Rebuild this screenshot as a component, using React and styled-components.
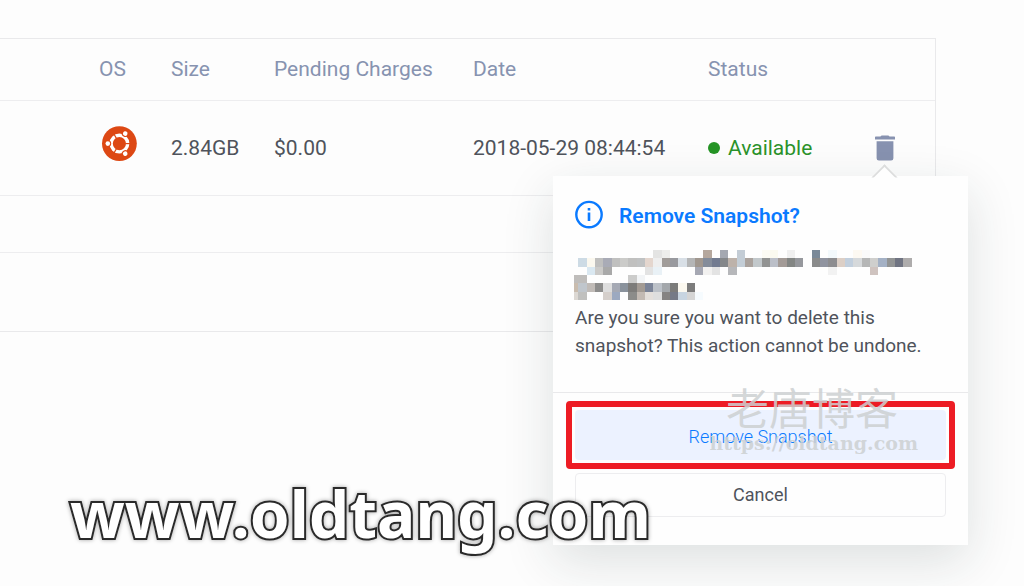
import React from "react";
import styled, { createGlobalStyle } from "styled-components";

const GlobalStyle = createGlobalStyle`
  * {
    box-sizing: border-box;
  }

  body {
    margin: 0;
    background: #fdfdfd;
    color: #4f535b;
    font-family: Roboto, "Liberation Sans", sans-serif;
    font-size: 21px;
    line-height: 28px;
    overflow-x: hidden;
  }
`;

const Page = styled.main`
  position: relative;
  min-height: 100vh;
  padding: 38px 88px 0 0;
`;

const Panel = styled.section`
  border: 1px solid #e9e9eb;
  border-left: none;
`;

const SnapshotTable = styled.table`
  width: 100%;
  table-layout: fixed;
  border-collapse: collapse;
  text-align: left;
`;

const HeadCell = styled.th`
  width: ${(props) => props.$width || "auto"};
  height: 61px;
  padding: 0 0 1px ${(props) => props.$indent || "0"};
  border-bottom: 1px solid #ededef;
  color: #8793b0;
  font-weight: 400;
`;

const Cell = styled.td`
  height: 95px;
  padding: 0 0 0 ${(props) => props.$indent || "0"};
  border-bottom: 1px solid #ededef;
`;

const Status = styled.span`
  display: flex;
  align-items: center;
  gap: 8px;
  color: #2b932b;

  &::before {
    content: "";
    width: 12px;
    height: 12px;
    border-radius: 50%;
    background: #259425;
  }
`;

const UbuntuLogo = styled.svg`
  display: block;
  width: 36px;
  height: 36px;
  margin-bottom: 8px;
`;

const Actions = styled.div`
  position: relative;
  width: 20px;
`;

const IconButton = styled.button`
  display: block;
  padding: 0;
  border: none;
  background: none;
  cursor: pointer;

  svg {
    display: block;
  }
`;

const Strip = styled.div`
  height: ${(props) => props.$height};

  & + & {
    border-top: 1px solid #ededef;
  }
`;

const Popover = styled.div`
  position: absolute;
  z-index: 1;
  top: 41px;
  right: -73px;
  width: 415px;
  background: #fefefe;
  box-shadow: 0 16px 48px rgba(30, 50, 50, 0.14);
  font-size: 19px;

  &::before {
    content: "";
    position: absolute;
    top: -8px;
    right: 74px;
    width: 17px;
    height: 17px;
    border: 2px solid #dcdddd;
    border-right: none;
    border-bottom: none;
    background: #fefefe;
    transform: rotate(45deg);
    clip-path: polygon(0 0, 100% 0, 0 100%);
  }
`;

const PopoverBody = styled.div`
  padding: 26px 22px 32px;
`;

const PopoverTitle = styled.h2`
  display: flex;
  align-items: center;
  gap: 16px;
  margin: 0 0 20px;
  color: #0a7aff;
  font-size: 21px;
  font-weight: 600;

  svg {
    overflow: visible;
  }
`;

const Redacted = styled.svg`
  display: block;
  width: 346px;
  height: 50px;
  margin: 0 0 4px -1px;
`;

const Message = styled.p`
  margin: 0;
`;

const PopoverFooter = styled.div`
  position: relative;
  display: flex;
  flex-direction: column;
  gap: 4px;
  padding: 8px 22px 28px;
  border-top: 1px solid #e9e9eb;
`;

const Highlight = styled.div`
  display: flex;
  margin: 0 -9px;
  padding: 3px;
  border: 6px solid #ed1c24;
  border-radius: 4px;
`;

const Button = styled.button`
  flex: ${(props) => (props.$primary ? "1" : "none")};
  height: ${(props) => (props.$primary ? "50px" : "44px")};
  padding: ${(props) => (props.$primary ? "3px 0 0" : "0")};
  border: ${(props) => (props.$primary ? "none" : "1px solid #ededef")};
  border-radius: 4px;
  background: ${(props) => (props.$primary ? "#ecf2ff" : "#fefefe")};
  color: ${(props) => (props.$primary ? "#0a7aff" : "#4f535b")};
  font-family: inherit;
  font-size: 18px;
  font-weight: ${(props) => (props.$primary ? "300" : "400")};
  cursor: pointer;
`;

const BlogMark = styled.div`
  position: absolute;
  top: -10px;
  right: 50px;
  color: rgba(205, 208, 209, 0.85);
  text-align: right;
  pointer-events: none;
`;

const BlogName = styled.div`
  padding-right: 20px;
  font-family: "Noto Sans CJK SC", sans-serif;
  font-size: 43px;
  line-height: 46px;
`;

const BlogUrl = styled.div`
  font-family: "DejaVu Serif", serif;
  font-size: 19px;
  font-weight: 700;
  line-height: 28px;
`;

const SiteMark = styled.div`
  position: absolute;
  z-index: 2;
  left: 70px;
  top: 469px;
  color: #ffffff;
  font-family: "Noto Sans", sans-serif;
  font-size: 64px;
  font-weight: 700;
  line-height: 90px;
  -webkit-text-stroke: 4px #2a2a2a;
  paint-order: stroke fill;
  stroke-linejoin: round;
  filter: drop-shadow(0 0 2px rgba(0, 0, 0, 0.35));
  pointer-events: none;
`;

// colours of the hidden name, row by row: [column, colour]
const mosaic = [
  [
    [9, "#e4e4e3"], [10, "#eeeeec"], [15, "#b5a79d"], [17, "#a4a8b1"],
    [19, "#c3ccd5"], [22, "#fcfbf4"], [23, "#fbfaf0"], [25, "#f0f0f0"],
    [28, "#7a8998"], [30, "#f3f9fc"], [33, "#fdf9f2"], [34, "#fafafa"],
  ],
  [
    [0, "#cddbe5"], [1, "#fbf8ef"], [2, "#bfbfbe"], [3, "#a9abb6"],
    [4, "#c0c0bf"], [5, "#cbcbc9"], [6, "#c0c0bf"], [7, "#c0c2c3"],
    [8, "#e4d6ce"], [9, "#eeeeee"], [10, "#a19c99"], [11, "#98999e"],
    [12, "#d8dfe6"], [13, "#b4b5b6"], [14, "#a0978f"], [15, "#848c9a"],
    [16, "#727b90"], [17, "#84878a"], [18, "#bdb2aa"], [19, "#c3cdd6"],
    [20, "#aaa29d"], [21, "#c2c8cb"], [22, "#929392"], [23, "#bbbfc8"],
    [24, "#a39b97"], [25, "#838684"], [26, "#96989d"], [28, "#8a8b8b"],
    [29, "#9094a0"], [30, "#8d8d90"], [31, "#dccfc6"], [32, "#c2cfdd"],
    [33, "#d6d9db"], [34, "#b5b6b6"], [35, "#cfcfcd"], [36, "#a4b1c5"],
    [37, "#929494"], [38, "#707482"], [39, "#aeacac"],
  ],
  [
    [1, "#dae8f1"], [2, "#cbcac8"], [3, "#a9a9a9"], [8, "#e3e3e3"],
    [9, "#e9f1f6"], [14, "#a6a8b3"], [15, "#f2f1f0"], [16, "#e3e3e3"],
    [18, "#b6b7ba"], [30, "#f2f2f2"], [35, "#cfc3bf"],
  ],
  [[-1, "#bfbdbb"], [0, "#bfbdbb"], [6, "#cccccb"], [7, "#f2f4f6"]],
  [
    [-1, "#c9bcae"], [0, "#c0c6cc"], [1, "#c0bbb7"], [2, "#8d8d8c"],
    [3, "#dedede"], [4, "#a5a9b4"], [5, "#8a929c"], [6, "#7d7c7a"],
    [7, "#a39b94"], [8, "#7b8498"], [9, "#bcc1c8"], [10, "#a3a7ab"],
    [11, "#7b7b7a"], [12, "#fbf8ef"], [13, "#7c7c7c"],
  ],
  [
    [-1, "#dcd8d3"], [0, "#c0c0be"], [3, "#d5cfcb"], [4, "#9ca9c0"],
    [6, "#8c8c8a"], [7, "#c3bab3"], [8, "#e4dfdb"], [9, "#dedede"],
    [10, "#858382"], [11, "#757a87"], [12, "#c8d5e1"], [13, "#d5d5d5"],
    [14, "#f6fbfe"],
  ],
];

const Ubuntu = () => (
  <UbuntuLogo viewBox="0 0 36 36" role="img" aria-label="Ubuntu">
    <circle cx="18.4" cy="17.6" r="17.4" fill="#dd4814" />
    <circle cx="18.4" cy="17.6" r="8.3" fill="none" stroke="#fff" strokeWidth="3.4" />
    {[0, 120, 240].map((angle) => (
      <g key={angle} transform={`rotate(${angle} 18.4 17.6)`}>
        <path d="M24.4 17.6h5" stroke="#dd4814" strokeWidth="1.2" />
        <circle cx="6.8" cy="17.6" r="3.4" fill="#dd4814" />
        <circle cx="6.8" cy="17.6" r="2.3" fill="#fff" />
      </g>
    ))}
  </UbuntuLogo>
);

const TrashIcon = () => (
  <svg width="20" height="26" viewBox="0 0 20 26" fill="#8792b0">
    <path d="M0 2.2q0-.7.7-.7H5.4L6.6.5h6.8l1.2 1h4.7q.7 0 .7.7V4.6H0z" />
    <path d="M1.6 6.2h16.8v17q0 2.3-2.3 2.3H3.9q-2.3 0-2.3-2.3z" />
  </svg>
);

const InfoIcon = () => (
  <svg width="28" height="28" viewBox="0 0 28 28" fill="none" stroke="#0a7aff">
    <circle cx="14" cy="12.6" r="12.7" strokeWidth="2.4" />
    <path d="M14 10.6v8.4M14 6v2.5" strokeWidth="2.6" />
  </svg>
);

const RemovePopover = () => (
  <Popover role="dialog" aria-labelledby="remove-title">
    <PopoverBody>
      <PopoverTitle id="remove-title">
        <InfoIcon />
        Remove Snapshot?
      </PopoverTitle>
      <Redacted viewBox="-0.5 0 41.5 6" shapeRendering="crispEdges" aria-hidden="true">
        {mosaic.map((row, y) =>
          row.map(([x, color]) => (
            <rect key={`${x}-${y}`} x={x} y={y} width="1" height="1" fill={color} />
          ))
        )}
      </Redacted>
      <Message>
        Are you sure you want to delete this snapshot? This action cannot be
        undone.
      </Message>
    </PopoverBody>
    <PopoverFooter>
      <Highlight>
        <Button type="button" $primary>
          Remove Snapshot
        </Button>
      </Highlight>
      <Button type="button">Cancel</Button>
      <BlogMark>
        <BlogName>老唐博客</BlogName>
        <BlogUrl>https://oldtang.com</BlogUrl>
      </BlogMark>
    </PopoverFooter>
  </Popover>
);

const App = () => (
  <>
    <GlobalStyle />
    <Page>
      <Panel>
        <SnapshotTable>
          <thead>
            <tr>
              <HeadCell $width="171px" $indent="99px">OS</HeadCell>
              <HeadCell $width="103px">Size</HeadCell>
              <HeadCell $width="199px">Pending Charges</HeadCell>
              <HeadCell>Date</HeadCell>
              <HeadCell $width="167px">Status</HeadCell>
              <HeadCell $width="60px" aria-label="Actions" />
            </tr>
          </thead>
          <tbody>
            <tr>
              <Cell $indent="101px">
                <Ubuntu />
              </Cell>
              <Cell>2.84GB</Cell>
              <Cell>$0.00</Cell>
              <Cell>2018-05-29 08:44:54</Cell>
              <Cell>
                <Status>Available</Status>
              </Cell>
              <Cell>
                <Actions>
                  <IconButton type="button" aria-label="Remove snapshot">
                    <TrashIcon />
                  </IconButton>
                  <RemovePopover />
                </Actions>
              </Cell>
            </tr>
          </tbody>
        </SnapshotTable>
        <Strip $height="56px" />
        <Strip $height="79px" />
      </Panel>
      <SiteMark>www.oldtang.com</SiteMark>
    </Page>
  </>
);

export default App;
